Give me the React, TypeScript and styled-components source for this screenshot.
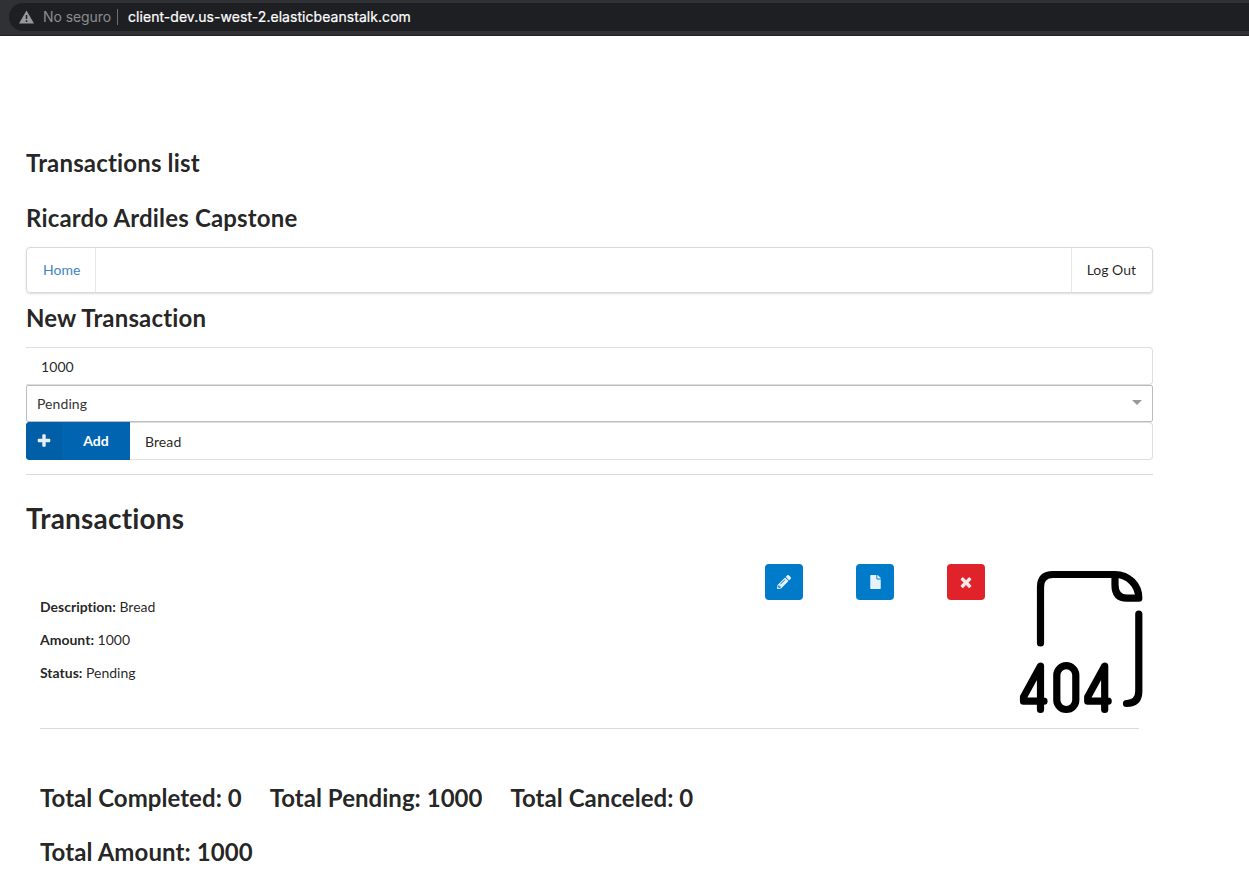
import React from 'react';
import styled, { createGlobalStyle } from 'styled-components';

const Global = createGlobalStyle`
  *, *::before, *::after { box-sizing: border-box; }
  body {
    margin: 0;
    background: #fff;
    color: rgba(0,0,0,.87);
    font: 14px/20px Lato, "Liberation Sans", sans-serif;
    font-variant-ligatures: none;
  }
`;

const AddressStrip = styled.div`
  height: 36px;
  padding: 3px 0 5px 9px;
  background: #303135;
  border-bottom: 1px solid #1f2023;
`;
const AddressBar = styled.div`
  height: 28px;
  display: flex;
  align-items: center;
  padding-left: 10px;
  border-radius: 14px 0 0 14px;
  background: #1e1f22;
  font: 14px/20px Inter, sans-serif;
  color: #fff;
`;
const Insecure = styled.span`
  width: 74px;
  margin-left: 9px;
  color: #8a8d91;
  letter-spacing: -.08px;
`;
const Separator = styled.span`
  width: 1px;
  height: 16px;
  margin-right: 10px;
  background: #6b6e72;
`;
const Address = styled.span`
  letter-spacing: .05px;
  -webkit-text-stroke: .2px #fff;
`;

const Page = styled.main`
  width: 1127px;
  margin-left: 26px;
  padding-top: 111px;
`;
const Title = styled.h2<{ $gap?: number; $tracking?: number }>`
  margin: 0 0 ${p => p.$gap ?? 0}px;
  font-size: 24px;
  line-height: 31px;
  font-weight: 700;
  letter-spacing: ${p => p.$tracking ?? 0.16}px;
`;
const BigTitle = styled.h1`
  margin: 25px 0 0;
  font-size: 28px;
  line-height: 36px;
  font-weight: 700;
  letter-spacing: .2px;
`;
const Menu = styled.nav`
  display: flex;
  justify-content: space-between;
  height: 46px;
  margin-bottom: 9px;
  border: 1px solid #d9d9da;
  border-radius: 4px;
  box-shadow: 0 1px 2px 0 rgba(34,36,38,.15);
`;
const MenuItem = styled.a<{ $end?: boolean }>`
  display: flex;
  align-items: center;
  padding: 0 ${p => (p.$end ? 16 : 15)}px 0 ${p => (p.$end ? 15 : 16)}px;
  color: ${p => (p.$end ? 'rgba(0,0,0,.87)' : '#4183c4')};
  border: solid #e8e8e9;
  border-width: ${p => (p.$end ? '0 0 0 1px' : '0 1px 0 0')};
`;
const FieldRow = styled.div`
  display: flex;
  height: 38px;
`;
const Field = styled.input`
  flex: 1;
  min-width: 0;
  padding: 1px 15px 0;
  border: 1px solid #dededf;
  border-left: 0;
  border-radius: 0 4px 4px 0;
  outline: 0;
  background: #fff;
  color: rgba(0,0,0,.87);
  font: inherit;
  letter-spacing: .08px;
`;
const Picker = styled.div`
  display: flex;
  align-items: center;
  justify-content: space-between;
  height: 37px;
  padding: 1px 10px 0;
  border: 1px solid #bcbcbc;
  border-radius: 2px;
  color: #333;
  letter-spacing: .08px;
`;
const Caret = styled.i`
  margin-top: -4px;
  border: solid transparent;
  border-width: 5px 5px 0;
  border-top-color: #999;
`;
const AddButton = styled.button`
  display: flex;
  width: 104px;
  padding: 0;
  border: 0;
  border-radius: 4px 0 0 4px;
  overflow: hidden;
  background: #0064b0;
  color: #fff;
  font: 700 14px/37px Lato, sans-serif;
`;
const AddIcon = styled.span`
  display: flex;
  align-items: center;
  justify-content: center;
  width: 36px;
  height: 38px;
  background: #005fa7;
`;
const AddLabel = styled.span`
  flex: 1;
`;
const Rule = styled.hr<{ $top?: number }>`
  height: 1px;
  margin: ${p => p.$top ?? 0}px 0 0;
  border: 0;
  background: #dadadb;
`;
const Record = styled.section`
  display: flex;
  height: 164px;
  margin-top: 28px;
  padding-left: 14px;
`;
const Details = styled.div`
  width: 725px;
  flex: none;
  padding-top: 33px;
`;
const Detail = styled.p`
  margin: 0 0 13px;
`;
const Actions = styled.div`
  display: flex;
  gap: 53px;
`;
const Action = styled.button<{ $danger?: boolean }>`
  display: flex;
  flex: none;
  align-items: center;
  justify-content: center;
  width: 38px;
  height: 36px;
  padding: 0;
  border: 0;
  border-radius: 4px;
  background: ${p => (p.$danger ? '#e0232b' : '#007bc9')};
`;
const Picture = styled.svg`
  margin-left: 29px;
  flex: none;
`;
const Summary = styled.section`
  padding: 0 14px;
`;
const Totals = styled.div`
  display: flex;
  gap: 28px;
  margin: 53px 0 23px;
`;

const glyphs = {
  plus: 'M1600 736v192q0 40-28 68t-68 28h-416v416q0 40-28 68t-68 28h-192q-40 0-68-28t-28-68v-416h-416q-40 0-68-28t-28-68v-192q0-40 28-68t68-28h416v-416q0-40 28-68t68-28h192q40 0 68 28t28 68v416h416q40 0 68 28t28 68z',
  times: 'M1490 1322q0 40-28 68l-136 136q-28 28-68 28t-68-28l-294-294-294 294q-28 28-68 28t-68-28l-136-136q-28-28-28-68t28-68l294-294-294-294q-28-28-28-68t28-68l136-136q28-28 68-28t68 28l294 294 294-294q28-28 68-28t68 28l136 136q28 28 28 68t-28 68l-294 294 294 294q28 28 28 68z',
};

const Glyph = ({ name }: { name: keyof typeof glyphs }) => (
  <svg width="16" height="16" viewBox="0 0 1792 1792" fill="#fff" opacity=".9"><path d={glyphs[name]} /></svg>
);

export default function App() {
  return (
    <>
      <Global />
      <AddressStrip>
        <AddressBar>
          <svg width="15" height="14" viewBox="0 0 15 14">
            <path d="M7.5 .5 15 13.5H0z" fill="#96999d" />
            <path d="M7.5 5v4M7.5 10.3v1.7" stroke="#1e1f22" strokeWidth="1.5" />
          </svg>
          <Insecure>No seguro</Insecure>
          <Separator />
          <Address>client-dev.us-west-2.elasticbeanstalk.com</Address>
        </AddressBar>
      </AddressStrip>
      <Page>
        <Title $gap={24}>Transactions list</Title>
        <Title $gap={14}>Ricardo Ardiles Capstone</Title>
        <Menu>
          <MenuItem>Home</MenuItem>
          <MenuItem $end>Log Out</MenuItem>
        </Menu>
        <Title $gap={14}>New Transaction</Title>
        <FieldRow><Field defaultValue="1000" /></FieldRow>
        <Picker>Pending<Caret /></Picker>
        <FieldRow>
          <AddButton>
            <AddIcon><Glyph name="plus" /></AddIcon>
            <AddLabel>Add</AddLabel>
          </AddButton>
          <Field defaultValue="Bread" />
        </FieldRow>
        <Rule $top={14} />
        <BigTitle>Transactions</BigTitle>
        <Record>
          <Details>
            <Detail><b>Description:</b> Bread</Detail>
            <Detail><b>Amount:</b> 1000</Detail>
            <Detail><b>Status:</b> Pending</Detail>
          </Details>
          <Actions>
            <Action>
              <svg width="14" height="14" viewBox="0 0 512 512" fill="#fff" opacity=".9">
                <path d="M497.900 142.100l-46.100 46.100c-4.700 4.700-12.300 4.700-17 0l-111-111c-4.700-4.700-4.700-12.300 0-17l46.100-46.100c18.700-18.700 49.100-18.700 67.900 0l60.100 60.100c18.800 18.700 18.800 49.100 0 67.900zM284.200 99.800L21.600 362.400.4 483.900c-2.900 16.400 11.400 30.600 27.800 27.800l121.500-21.300 262.600-262.600c4.700-4.700 4.700-12.300 0-17l-111-111c-4.800-4.700-12.400-4.700-17.100 0zM124.100 339.900c-5.500-5.500-5.500-14.300 0-19.800l154-154c5.500-5.500 14.300-5.500 19.800 0s5.500 14.300 0 19.800l-154 154c-5.500 5.500-14.300 5.500-19.800 0zM88 424h48v36.300l-64.500 11.300-31.100-31.100L51.700 376H88v48z" />
              </svg>
            </Action>
            <Action>
              <svg width="11" height="14" viewBox="0 0 384 512" fill="#fff" opacity=".9">
                <path d="M224 136V0H24C10.700 0 0 10.700 0 24v464c0 13.300 10.700 24 24 24h336c13.300 0 24-10.700 24-24V160H248c-13.200 0-24-10.800-24-24zm160-14.100v6.100H256V0h6.100c6.400 0 12.500 2.500 17 7l97.900 98c4.500 4.500 7 10.600 7 16.900z" />
              </svg>
            </Action>
            <Action $danger><Glyph name="times" /></Action>
          </Actions>
          <Picture width="140" height="160" viewBox="1014.500 564 140 160" fill="none" stroke="#000" strokeWidth="7.200" strokeLinecap="round" strokeLinejoin="round">
            <path d="M1041 643V587Q1041 574.500 1053.500 574.500H1115.500C1129 574.500 1139.300 585 1139.300 598.200H1127.500Q1115.500 598.200 1115.500 585V575" />
            <path d="M1139.300 614V691Q1139.300 703.500 1127 703.500" />
            <path d="M1041 709.500V666L1024 697V701.200H1044.500" />
            <path d="M1105.200 709.500V666L1088.200 697V701.200H1108.700" />
            <rect x="1057.300" y="665.700" width="19" height="43.800" rx="9.500" />
          </Picture>
        </Record>
        <Summary>
          <Rule />
          <Totals>
            <Title $tracking={0.04}>Total Completed: 0</Title>
            <Title $tracking={0.03}>Total Pending: 1000</Title>
            <Title $tracking={0.04}>Total Canceled: 0</Title>
          </Totals>
          <Title $tracking={0.08}>Total Amount: 1000</Title>
        </Summary>
      </Page>
    </>
  );
}
